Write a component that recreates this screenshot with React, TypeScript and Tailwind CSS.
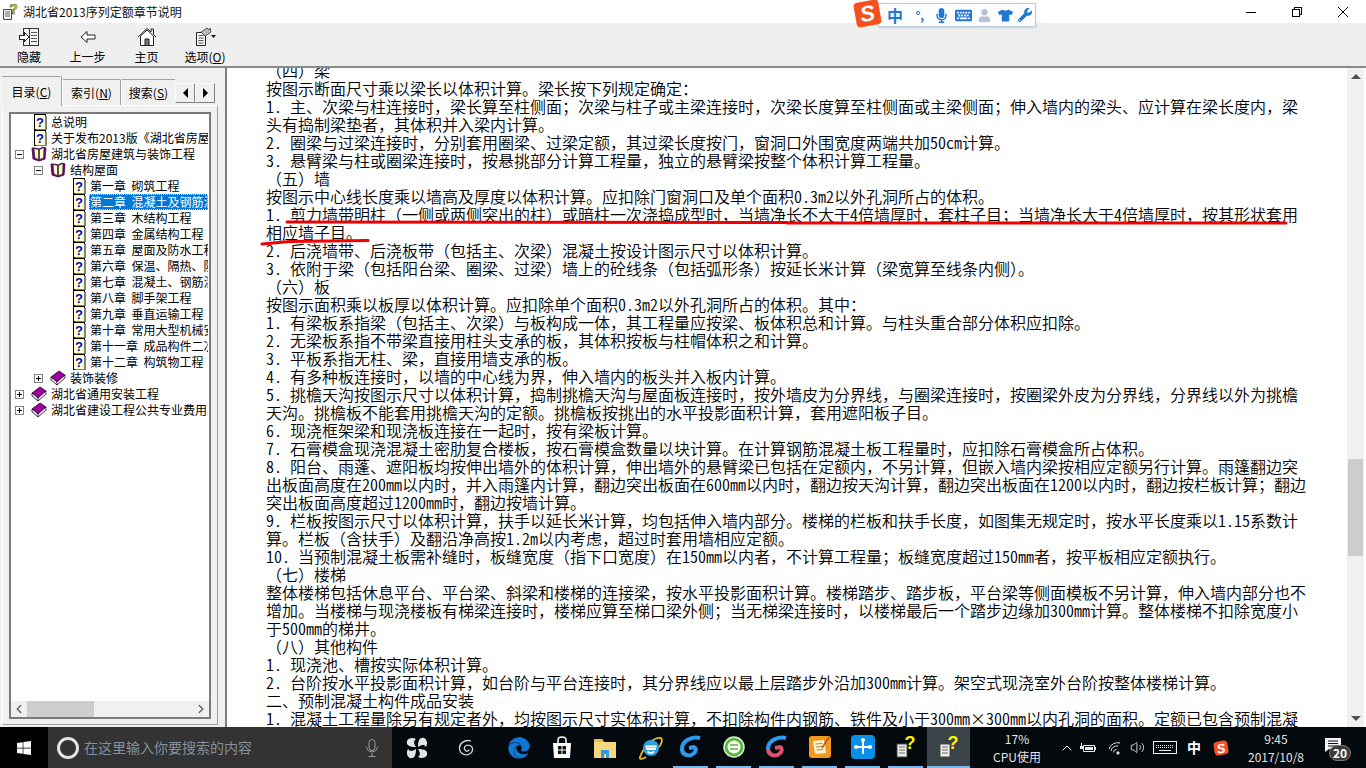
import { ChevronLeft, ChevronRight, ChevronUp, Volume2 } from 'lucide-react'
import { FaEdge, FaInternetExplorer, FaWindows, FaTshirt, FaWrench, FaMicrophone, FaKeyboard, FaUser } from 'react-icons/fa'

const bodyLines = [
  '（四）梁',
  '按图示断面尺寸乘以梁长以体积计算。梁长按下列规定确定：',
  '1. 主、次梁与柱连接时，梁长算至柱侧面；次梁与柱子或主梁连接时，次梁长度算至柱侧面或主梁侧面；伸入墙内的梁头、应计算在梁长度内，梁',
  '头有捣制梁垫者，其体积并入梁内计算。',
  '2. 圈梁与过梁连接时，分别套用圈梁、过梁定额，其过梁长度按门，窗洞口外围宽度两端共加50cm计算。',
  '3. 悬臂梁与柱或圈梁连接时，按悬挑部分计算工程量，独立的悬臂梁按整个体积计算工程量。',
  '（五）墙',
  '按图示中心线长度乘以墙高及厚度以体积计算。应扣除门窗洞口及单个面积0.3m2以外孔洞所占的体积。',
  '1. 剪力墙带明柱（一侧或两侧突出的柱）或暗柱一次浇捣成型时，当墙净长不大于4倍墙厚时，套柱子目；当墙净长大于4倍墙厚时，按其形状套用',
  '相应墙子目。',
  '2. 后浇墙带、后浇板带（包括主、次梁）混凝土按设计图示尺寸以体积计算。',
  '3. 依附于梁（包括阳台梁、圈梁、过梁）墙上的砼线条（包括弧形条）按延长米计算（梁宽算至线条内侧）。',
  '（六）板',
  '按图示面积乘以板厚以体积计算。应扣除单个面积0.3m2以外孔洞所占的体积。其中：',
  '1. 有梁板系指梁（包括主、次梁）与板构成一体，其工程量应按梁、板体积总和计算。与柱头重合部分体积应扣除。',
  '2. 无梁板系指不带梁直接用柱头支承的板，其体积按板与柱帽体积之和计算。',
  '3. 平板系指无柱、梁，直接用墙支承的板。',
  '4. 有多种板连接时，以墙的中心线为界，伸入墙内的板头并入板内计算。',
  '5. 挑檐天沟按图示尺寸以体积计算，捣制挑檐天沟与屋面板连接时，按外墙皮为分界线，与圈梁连接时，按圈梁外皮为分界线，分界线以外为挑檐',
  '天沟。挑檐板不能套用挑檐天沟的定额。挑檐板按挑出的水平投影面积计算，套用遮阳板子目。',
  '6. 现浇框架梁和现浇板连接在一起时，按有梁板计算。',
  '7. 石膏模盒现浇混凝土密肋复合楼板，按石膏模盒数量以块计算。在计算钢筋混凝土板工程量时，应扣除石膏模盒所占体积。',
  '8. 阳台、雨蓬、遮阳板均按伸出墙外的体积计算，伸出墙外的悬臂梁已包括在定额内，不另计算，但嵌入墙内梁按相应定额另行计算。雨篷翻边突',
  '出板面高度在200mm以内时，并入雨篷内计算，翻边突出板面在600mm以内时，翻边按天沟计算，翻边突出板面在1200以内时，翻边按栏板计算；翻边',
  '突出板面高度超过1200mm时，翻边按墙计算。',
  '9. 栏板按图示尺寸以体积计算，扶手以延长米计算，均包括伸入墙内部分。楼梯的栏板和扶手长度，如图集无规定时，按水平长度乘以1.15系数计',
  '算。栏板（含扶手）及翻沿净高按1.2m以内考虑，超过时套用墙相应定额。',
  '10. 当预制混凝土板需补缝时，板缝宽度（指下口宽度）在150mm以内者，不计算工程量；板缝宽度超过150mm者，按平板相应定额执行。',
  '（七）楼梯',
  '整体楼梯包括休息平台、平台梁、斜梁和楼梯的连接梁，按水平投影面积计算。楼梯踏步、踏步板，平台梁等侧面模板不另计算，伸入墙内部分也不',
  '增加。当楼梯与现浇楼板有梯梁连接时，楼梯应算至梯口梁外侧；当无梯梁连接时，以楼梯最后一个踏步边缘加300mm计算。整体楼梯不扣除宽度小',
  '于500mm的梯井。',
  '（八）其他构件',
  '1. 现浇池、槽按实际体积计算。',
  '2. 台阶按水平投影面积计算，如台阶与平台连接时，其分界线应以最上层踏步外沿加300mm计算。架空式现浇室外台阶按整体楼梯计算。',
  '二、预制混凝土构件成品安装',
  '1. 混凝土工程量除另有规定者外，均按图示尺寸实体积计算，不扣除构件内钢筋、铁件及小于300mm×300mm以内孔洞的面积。定额已包含预制混凝',
]

const chapters = [
  '第一章  砌筑工程',
  '第二章  混凝土及钢筋混凝土工程',
  '第三章  木结构工程',
  '第四章  金属结构工程',
  '第五章  屋面及防水工程',
  '第六章  保温、隔热、防腐工程',
  '第七章  混凝土、钢筋混凝土模板',
  '第八章  脚手架工程',
  '第九章  垂直运输工程',
  '第十章  常用大型机械安拆',
  '第十一章  成品构件二次运输',
  '第十二章  构筑物工程',
]

function BodyLine({ text }: { text: string }) {
  // only the latin runs go half width, the chinese punctuation has to stay full width
  const runs = text.split(/([\x20-\x7e]+)/)
  return (
    <div className="h-[18px] leading-[18px] whitespace-pre">
      {runs.map((r, i) =>
        i % 2 === 1 ? (
          <span key={i} className="[font-feature-settings:'hwid']">{r}</span>
        ) : (
          r
        ),
      )}
    </div>
  )
}

function HelpPage() {
  return (
    <svg width="16" height="16" viewBox="0 0 16 16" className="shrink-0" shapeRendering="crispEdges">
      <path d="M3.500 .5h11v15h-11z" fill="#ffffc8" stroke="#000" />
      <path d="M14 2h1.500v14H5v-1h9z" fill="#808080" />
      <text x="9" y="12.500" textAnchor="middle" fontSize="13" fontWeight="700" fill="#0000e0" fontFamily="Liberation Sans">?</text>
    </svg>
  )
}

function OpenBook() {
  return (
    <svg width="16" height="16" viewBox="0 0 16 16" className="shrink-0">
      <path d="M1 2l1 11 6 2 6-2 1-11-3-1-4 2-4-1z" fill="#800080" stroke="#400040" strokeWidth=".8" />
      <path d="M3 2.500l4.500 1v10L4 12zM13 1.500l-4.500 2v10l4-1.500z" fill="#ffffc8" stroke="#222" strokeWidth=".6" />
    </svg>
  )
}

function ClosedBook() {
  return (
    <svg width="16" height="16" viewBox="0 0 16 16" className="shrink-0">
      <path d="M1 7l8-6 6 4-8 7z" fill="#a000a0" stroke="#200020" strokeWidth=".8" />
      <path d="M1 7v3l6 5 8-7V5l-8 7z" fill="#f4f4f4" stroke="#200020" strokeWidth=".8" />
      <path d="M7 12v3" stroke="#200020" strokeWidth=".8" />
    </svg>
  )
}

function Toggle({ open }: { open: boolean }) {
  return (
    <span className="relative w-[9px] h-[9px] shrink-0 border border-[#808080] bg-white mr-[7px]">
      <span className="absolute left-[1px] top-[3px] w-[5px] h-[1px] bg-black" />
      {!open && <span className="absolute left-[3px] top-[1px] w-[1px] h-[5px] bg-black" />}
    </span>
  )
}

function SogouLogo({ size }: { size: string }) {
  return (
    <span className={`${size} flex items-center justify-center rounded-[4px] bg-[#f4511e] -rotate-[10deg] text-white font-bold italic leading-none font-['Liberation_Sans',sans-serif]`}>
      S
    </span>
  )
}

function TreeLabel({ children, selected }: { children: string; selected?: boolean }) {
  return (
    <span
      className={
        selected
          ? 'ml-[3px] px-[1px] flex-1 min-w-0 overflow-hidden whitespace-pre h-[16px] leading-[15px] bg-[#0078d7] text-white outline-1 outline-dotted outline-[#ffd08a] -outline-offset-1'
          : 'ml-[3px] px-[1px] flex-1 min-w-0 overflow-hidden whitespace-pre leading-[16px]'
      }
    >
      {children}
    </span>
  )
}

function Sidebar() {
  return (
    <aside className="w-[219px] shrink-0 bg-[#f0f0f0] pt-[8px] pl-[2px] flex flex-col">
      <div className="flex items-end h-[30px] text-[12px] text-black relative z-10">
        <div className="w-[61px] h-[30px] -ml-[1px] bg-[#f0f0f0] border border-b-0 border-[#a0a0a0] border-l-white rounded-t-[2px] flex items-center justify-center">
          目录(<u>C</u>)
        </div>
        <div className="w-[59px] h-[26px] mb-[1px] bg-[#f0f0f0] border border-b-0 border-[#a0a0a0] border-l-white rounded-t-[2px] flex items-center justify-center">
          索引(<u>N</u>)
        </div>
        <div className="w-[54px] h-[26px] mb-[1px] bg-[#f0f0f0] border-t border-l border-t-[#a0a0a0] border-l-white overflow-hidden flex items-center justify-center whitespace-nowrap">
          搜索(<u>S</u>)
        </div>
        <div className="flex mb-[3px]">
          <button className="w-[20px] h-[20px] border border-[#808080] border-t-white border-l-white flex items-center justify-center">
            <span className="w-0 h-0 border-y-[5px] border-y-transparent border-r-[5px] border-r-black" />
          </button>
          <button className="w-[20px] h-[20px] border border-[#808080] border-t-white border-l-white flex items-center justify-center">
            <span className="w-0 h-0 border-y-[5px] border-y-transparent border-l-[5px] border-l-black" />
          </button>
        </div>
      </div>
      <div className="flex-1 w-[216px] -mt-[1px] mb-[2px] border border-[#a0a0a0] border-l-white border-t-white px-[6px] pt-[6px] pb-[5px] flex">
        <div className="flex-1 min-w-0 border-2 border-[#7a7a7a] bg-white flex flex-col text-[12px] text-black">
          <div className="flex-1 min-h-0 overflow-hidden pr-[1px]">
            <div className="flex items-center h-[16px] pl-[20px]"><HelpPage /><TreeLabel>总说明</TreeLabel></div>
            <div className="flex items-center h-[16px] pl-[20px]"><HelpPage /><TreeLabel>关于发布2013版《湖北省房屋建筑与装饰工程</TreeLabel></div>
            <div className="flex items-center h-[16px] pl-[4px]"><Toggle open /><OpenBook /><TreeLabel>湖北省房屋建筑与装饰工程</TreeLabel></div>
            <div className="flex items-center h-[16px] pl-[23px]"><Toggle open /><OpenBook /><TreeLabel>结构屋面</TreeLabel></div>
            {chapters.map((c, i) => (
              <div key={c} className="flex items-center h-[16px] pl-[59px]">
                <HelpPage />
                <TreeLabel selected={i === 1}>{c}</TreeLabel>
              </div>
            ))}
            <div className="flex items-center h-[16px] pl-[23px]"><Toggle open={false} /><ClosedBook /><TreeLabel>装饰装修</TreeLabel></div>
            <div className="flex items-center h-[16px] pl-[4px]"><Toggle open={false} /><ClosedBook /><TreeLabel>湖北省通用安装工程</TreeLabel></div>
            <div className="flex items-center h-[16px] pl-[4px]"><Toggle open={false} /><ClosedBook /><TreeLabel>湖北省建设工程公共专业费用</TreeLabel></div>
          </div>
          <div className="h-[16px] shrink-0 bg-[#f0f0f0] flex items-center text-[#606060]">
            <ChevronLeft className="w-[16px] h-[14px] shrink-0" strokeWidth={2.5} />
            <div className="w-[67px] h-full bg-[#cdcdcd]" />
            <div className="flex-1" />
            <ChevronRight className="w-[16px] h-[14px] shrink-0" strokeWidth={2.5} />
          </div>
        </div>
      </div>
    </aside>
  )
}

function ContentPane() {
  return (
    <div className="flex-1 min-w-0 flex bg-[#f0f0f0] pl-[6px]">
      <div className="relative flex-1 min-w-0 flex bg-white border-l-2 border-[#808080] overflow-hidden">
        <div className="flex-1 min-w-0 pl-[39px] -mt-[7px] text-[16px] text-black [font-weight:350]">
          {bodyLines.map((line, i) => (
            <BodyLine key={i} text={line} />
          ))}
        </div>
        {/* scrollbar */}
        <div className="w-[19px] shrink-0 pr-[2px] bg-white flex flex-col">
          <div className="flex-1 bg-[#f0f0f0] px-[1px] flex flex-col">
            <div className="h-[17px] flex items-center justify-center">
              <span className="w-0 h-0 border-x-[5px] border-x-transparent border-b-[5px] border-b-[#505050]" />
            </div>
            <div className="h-[374px]" />
            <div className="h-[97px] bg-[#cdcdcd]" />
            <div className="flex-1" />
            <div className="h-[17px] flex items-center justify-center">
              <span className="w-0 h-0 border-x-[5px] border-x-transparent border-t-[5px] border-t-[#505050]" />
            </div>
          </div>
        </div>
        {/* hand drawn red marks over the text */}
        <svg className="absolute left-0 top-0 w-full h-full pointer-events-none" fill="none" stroke="#f00000" strokeWidth="3" strokeLinecap="round">
          <path d="M60 154 L560 154.500" />
          <path d="M560 155 L1059 155" />
          <path d="M35 176 L63 173.500 L141 172.500" />
        </svg>
      </div>
    </div>
  )
}

function ToolButton({ label, children, className }: { label: React.ReactNode; children: React.ReactNode; className: string }) {
  return (
    <div className={`${className} flex flex-col items-center pt-[3px]`}>
      <div className="h-[22px] flex items-center justify-center">{children}</div>
      <div className="text-[12px] leading-[17px] text-black whitespace-nowrap">{label}</div>
    </div>
  )
}

function Toolbar() {
  return (
    <div className="h-[45px] shrink-0 bg-[#efefef] flex border-b-2 border-[#8a8a8a]">
      <ToolButton label="隐藏" className="w-[58px]">
        <svg width="22" height="20" viewBox="0 0 22 20" shapeRendering="crispEdges">
          <path d="M5.500 1.500h15v17h-15z" fill="#f4f4f4" stroke="#333" />
          <path d="M11.500 1.500v17" stroke="#333" />
          <path d="M13 5h6M13 8h6M13 11h6M13 14h6" stroke="#555" />
          <path d="M1 8h5V5l5 5-5 5v-3H1z" fill="#fff" stroke="#222" />
        </svg>
      </ToolButton>
      <ToolButton label="上一步" className="w-[59px]">
        <svg width="16" height="14" viewBox="0 0 16 14">
          <path d="M1 7l6-5.500v3.500h8v4H7v3.500z" fill="#fff" stroke="#222" />
        </svg>
      </ToolButton>
      <ToolButton label="主页" className="w-[59px]">
        <svg width="20" height="20" viewBox="0 0 20 20">
          <path d="M1 10L10 1.500l4 3.500V2h2.500v5.500L19 10" fill="#eee" stroke="#222" />
          <path d="M3.500 9v9.500h13V9L10 3z" fill="#fff" stroke="#222" />
          <path d="M8 18.500V12h4v6.500z" fill="#777" stroke="#222" />
        </svg>
      </ToolButton>
      <ToolButton label={<>选项(<u>O</u>)</>} className="w-[58px]">
        <svg width="22" height="20" viewBox="0 0 22 20">
          <path d="M2.500 5.500h9v13h-9z" fill="#f6f6f6" stroke="#222" />
          <path d="M4.500 8.500h5M4.500 11h5M4.500 13.500h5M4.500 16h5" stroke="#555" />
          <path d="M7 5l6-4 2 2 1-2 1 4-6 4z" fill="#bbb" stroke="#333" strokeWidth=".8" />
          <path d="M17 8h5l-2.500 3z" fill="#111" />
        </svg>
      </ToolButton>
    </div>
  )
}

function TitleBar() {
  return (
    <div className="h-[23px] shrink-0 bg-white flex items-center relative">
      <svg width="16" height="16" viewBox="0 0 16 16" className="ml-[2px]">
        <path d="M1.500 5.500h8v10h-8z" fill="#f4f4f4" stroke="#444" />
        <path d="M3 8h5M3 10h5M3 12h5" stroke="#666" />
        <text x="11.500" y="10" textAnchor="middle" fontSize="14" fontWeight="700" fill="#f2e300" stroke="#333" strokeWidth=".5" fontFamily="Liberation Sans">?</text>
      </svg>
      <span className="ml-[5px] text-[12px] text-[#111]">湖北省2013序列定额章节说明</span>
      <div className="flex-1" />
      <div className="flex items-center h-full text-black">
        <div className="w-[46px] flex justify-center"><svg width="10" height="10"><path d="M0 5.500h10" stroke="#000" /></svg></div>
        <div className="w-[46px] flex justify-center">
          <svg width="10" height="10" shapeRendering="crispEdges" fill="none" stroke="#000"><path d="M.5 2.500h7v7h-7zM2.500 2.500v-2h7v7h-2" /></svg>
        </div>
        <div className="w-[46px] flex justify-center"><svg width="10" height="10"><path d="M0 0l10 10M10 0L0 10" stroke="#000" /></svg></div>
      </div>
      {/* Sogou status bar floats above the title */}
      <div className="absolute left-[854px] top-0 flex items-start z-20">
        <SogouLogo size="w-[25px] h-[25px] mt-[1px] ml-[1px] text-[22px] z-10 relative" />
        <div className="ml-[-2px] mt-[3px] w-[158px] h-[24px] bg-[#fbfdff] border border-[#b9cbdc] flex items-center text-[#1f78d1] shadow-sm">
          <span className="w-[32px] pl-[8px] text-[16px] font-bold leading-none">中</span>
          <span className="w-[20px] text-[12px] font-bold leading-none text-center">°,</span>
          <span className="w-[24px] flex justify-center"><FaMicrophone size={15} /></span>
          <span className="w-[22px] flex justify-center"><FaKeyboard size={17} /></span>
          <span className="w-[22px] flex justify-center text-[#b5c3d6]"><FaUser size={13} /></span>
          <span className="w-[21px] flex justify-center"><FaTshirt size={15} /></span>
          <span className="w-[20px] flex justify-center"><FaWrench size={14} /></span>
        </div>
      </div>
    </div>
  )
}

function TaskSlot({ running, active, children }: { running?: boolean; active?: boolean; children: React.ReactNode }) {
  return (
    <div className={active ? 'w-[43px] h-full shrink-0 bg-[#3a4347] border-b-2 border-[#76b9ed] flex items-center justify-center' : running ? 'w-[43px] h-full shrink-0 px-[4px]' : 'w-[43px] h-full shrink-0 flex items-center justify-center'}>
      {running && !active ? <div className="h-full border-b-2 border-[#76b9ed] flex items-center justify-center">{children}</div> : children}
    </div>
  )
}

function TaskHelp() {
  return (
    <svg width="20" height="22" viewBox="0 0 20 22">
      <path d="M1 8h10v13H1z" fill="#eee" stroke="#444" />
      <path d="M3 11h6M3 14h6M3 17h6" stroke="#666" />
      <text x="14" y="13" textAnchor="middle" fontSize="18" fontWeight="700" fill="#fff000" fontFamily="Liberation Sans">?</text>
    </svg>
  )
}

function Taskbar() {
  return (
    <div className="h-[41px] shrink-0 bg-[#03090d] flex items-center text-white">
      <div className="w-[48px] h-full bg-black flex items-center justify-center"><FaWindows size={16} /></div>
      <div className="w-[344px] h-full bg-[#333333] flex items-center pl-[9px]">
        <span className="w-[22px] h-[22px] rounded-full border-[3px] border-[#e4e4e4]" />
        <span className="ml-[5px] text-[14px] text-[#84919c] flex-1">在这里输入你要搜索的内容</span>
        <svg width="14" height="18" viewBox="0 0 14 18" fill="none" stroke="#9a9a9a" className="mr-[13px]">
          <rect x="4" y=".5" width="6" height="11" rx="3" />
          <path d="M1.500 7.500c0 7 11 7 11 0M7 13.500v4M3.500 17.500h7" />
        </svg>
      </div>
      <div className="w-[50px] h-full flex items-center justify-center">
        <svg width="22" height="22" viewBox="0 0 22 22" fill="#dfe5e8">
          <path d="M10 10C3 10 0 8 1 4c1-3 6-4 9-2-3 2-2 5 0 8z" />
          <path d="M12 10c0-7 2-10 6-9 3 1 4 6 2 9-2-3-5-2-8 0z" />
          <path d="M12 12c7 0 10 2 9 6-1 3-6 4-9 2 3-2 2-5 0-8z" />
          <path d="M10 12c0 7-2 10-6 9-3-1-4-6-2-9 2 3 5 2 8 0z" />
        </svg>
      </div>
      <div className="w-[55px] h-full flex items-center justify-center pr-[5px]">
        <svg width="18" height="18" viewBox="0 0 18 18" fill="none" stroke="#cfd4d6" strokeWidth="1.300">
          <path d="M13 2C6 0 1 5 1.500 10c.5 5 6 7 10 5s4-7 .5-8.500S5 8 7 11c1.500 2 4 1 4-.5" />
        </svg>
      </div>
      <TaskSlot><FaEdge size={22} color="#0f78d4" /></TaskSlot>
      <TaskSlot>
        <svg width="22" height="24" viewBox="0 0 22 24">
          <path d="M2 7h18l-1 15H3z" fill="#fff" />
          <path d="M7 7V4c0-4 8-4 8 0v3" fill="none" stroke="#fff" strokeWidth="1.500" />
          <path d="M7 10h3.500v3.500H7zM11.500 10H15v3.500h-3.500zM7 14.500h3.500V18H7zM11.500 14.500H15V18h-3.500z" fill="#111" />
        </svg>
      </TaskSlot>
      <TaskSlot>
        <svg width="22" height="20" viewBox="0 0 22 20">
          <path d="M0 1h8l2 3h12v16H0z" fill="#f5d77e" />
          <path d="M0 1h8l2 3H0z" fill="#e6b84f" />
          <path d="M7 12h8v8h-3v-4h-2v4H7z" fill="#2e9be6" />
        </svg>
      </TaskSlot>
      <TaskSlot>
        <span className="relative left-[3px]">
          <svg width="24" height="24" viewBox="0 0 24 24">
            <path d="M22 2C16 1 6 8 1 21c-1 3 3 2 6 0" fill="none" stroke="#e8b923" strokeWidth="1.800" />
            <path d="M22 2c2 2 0 7-2 9" fill="none" stroke="#e8b923" strokeWidth="1.800" />
            <circle cx="12" cy="12" r="8" fill="#2b9fe0" />
            <path d="M6.500 10.500h11M7 13h10" stroke="#fff" strokeWidth="1.800" />
            <path d="M15 15.500c-1.500 2-5 2-6.500 0" fill="none" stroke="#fff" strokeWidth="1.800" />
          </svg>
        </span>
      </TaskSlot>
      <TaskSlot running>
        <svg width="24" height="24" viewBox="0 0 24 24" fill="none" stroke="#2a9bf0" strokeWidth="4">
          <path d="M21 3C12 1 3 6 3 14c0 6 7 8 11 5s3-6 1-7l-5 1" />
        </svg>
      </TaskSlot>
      <TaskSlot running>
        <svg width="24" height="24" viewBox="0 0 24 24">
          <circle cx="12" cy="12" r="10" fill="#58b63c" stroke="#d9f0cf" strokeWidth="1.500" />
          <circle cx="12" cy="12" r="6.500" fill="#fff" />
          <path d="M8 10h8M8 14h8" stroke="#58b63c" strokeWidth="1.500" />
        </svg>
      </TaskSlot>
      <TaskSlot running>
        <svg width="24" height="24" viewBox="0 0 24 24" fill="none" strokeWidth="4">
          <path d="M21 3C12 1 3 6 3 14" stroke="#2a9bf0" />
          <path d="M3 14c0 6 7 8 11 5s3-6 1-7l-5 1" stroke="#e2506a" />
        </svg>
      </TaskSlot>
      <TaskSlot running>
        <svg width="24" height="24" viewBox="0 0 24 24">
          <rect x="1" y="1" width="22" height="22" rx="3" fill="#f29a20" />
          <path d="M5 6l11-1 2 13-11 1z" fill="#fdf3d0" />
          <path d="M7.500 9l7-.5M8 12l7-.5M8.500 15l7-.5" stroke="#b9843a" />
          <path d="M21 2l-7 11" stroke="#b5521b" strokeWidth="1.500" />
        </svg>
      </TaskSlot>
      <TaskSlot running>
        <svg width="24" height="24" viewBox="0 0 24 24">
          <rect width="24" height="24" rx="4" fill="#0a8fe8" />
          <path d="M12 5v14M5 12h14" stroke="#fff" strokeWidth="2" />
          <circle cx="12" cy="5" r="2" fill="#fff" />
          <circle cx="5" cy="12" r="2" fill="#fff" />
          <circle cx="19" cy="12" r="2" fill="#fff" />
        </svg>
      </TaskSlot>
      <TaskSlot running><TaskHelp /></TaskSlot>
      <TaskSlot active><TaskHelp /></TaskSlot>

      <div className="w-[88px] ml-[3px] text-center text-[12px] leading-[18px] text-[#e6e6e6]">
        <div>17%</div>
        <div>CPU使用</div>
      </div>
      <div className="w-[12px] flex justify-center"><ChevronUp size={16} strokeWidth={1.5} className="shrink-0" /></div>
      <div className="w-[30px] flex justify-center">
        <svg width="16" height="12" viewBox="0 0 16 12" fill="#eee">
          <path d="M3.500 3.500h11v6h-11z" fill="none" stroke="#eee" />
          <path d="M5 5h8v3H5zM15 5h1v3h-1zM0 4h3v3H0zM1 1h1v3H1z" />
        </svg>
      </div>
      <div className="w-[24px] flex justify-center">
        <svg width="14" height="14" viewBox="0 0 14 14" fill="none" stroke="#ddd">
          <path d="M1 8a9 9 0 0 1 11-6M3 10a6 6 0 0 1 7-5M5.500 11.500a3 3 0 0 1 3-3" />
          <circle cx="10" cy="12" r="1.200" fill="#ddd" />
        </svg>
      </div>
      <div className="w-[20px] flex justify-center"><Volume2 size={15} strokeWidth={1.3} className="shrink-0" /></div>
      <div className="w-[36px] flex justify-center">
        <svg width="24" height="13" viewBox="0 0 24 13" fill="none" stroke="#eee" shapeRendering="crispEdges">
          <path d="M.5 .5h23v12H.5z" />
          <path d="M3 4h18M3 6.500h18" strokeDasharray="1 1" />
          <path d="M6 9.500h12" />
        </svg>
      </div>
      <div className="w-[22px] text-center text-[14px] font-bold">中</div>
      <div className="w-[32px] flex justify-center"><SogouLogo size="w-[14px] h-[14px] text-[13px]" /></div>
      <div className="w-[78px] text-center text-[12px] leading-[18px] text-[#e6e6e6]">
        <div>9:45</div>
        <div>2017/10/8</div>
      </div>
      <div className="w-[51px] h-full relative">
        <svg width="16" height="14" viewBox="0 0 16 14" className="absolute left-[10px] top-[11px]">
          <path d="M0 0h16v11H4l-4 3z" fill="#f4f4f4" />
          <path d="M3 3h10M3 5.500h10M3 8h10" stroke="#111" />
        </svg>
        <span className="absolute left-[14px] top-[18px] w-[22px] h-[16px] rounded-full bg-[#3c3c3c] border border-[#777] text-[12px] font-bold leading-[14px] text-center">20</span>
      </div>
    </div>
  )
}

export default function App() {
  return (
    <div className="w-[1366px] h-[768px] overflow-hidden flex flex-col bg-[#f0f0f0] font-['Noto_Sans_CJK_SC',sans-serif]">
      <TitleBar />
      <Toolbar />
      <div className="flex-1 min-h-0 flex">
        <Sidebar />
        <ContentPane />
      </div>
      <Taskbar />
    </div>
  )
}
